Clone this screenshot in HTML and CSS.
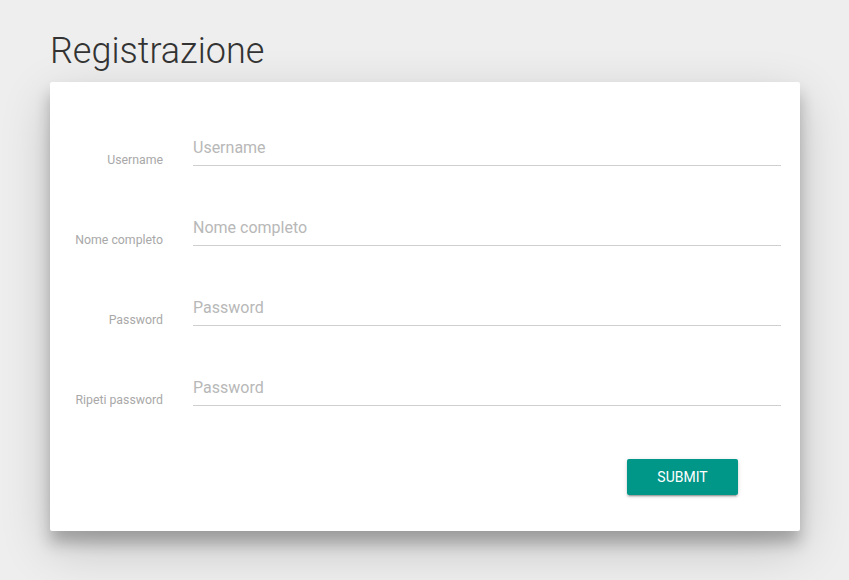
FILE: index.html
```html
<!DOCTYPE html>
<html lang="it">
<head>
<meta charset="utf-8">
<title>Registrazione</title>
<link rel="stylesheet" href="styles.css">
</head>
<body>
<main class="page">
  <h1 class="title">Registrazione</h1>
  <form class="card">
    <div class="row">
      <label class="label" for="u">Username</label>
      <input class="field" id="u" type="text" placeholder="Username">
    </div>
    <div class="row">
      <label class="label" for="n">Nome completo</label>
      <input class="field" id="n" type="text" placeholder="Nome completo">
    </div>
    <div class="row">
      <label class="label" for="p">Password</label>
      <input class="field" id="p" type="password" placeholder="Password">
    </div>
    <div class="row">
      <label class="label" for="r">Ripeti password</label>
      <input class="field" id="r" type="password" placeholder="Password">
    </div>
    <div class="actions">
      <button class="btn" type="button">SUBMIT</button>
    </div>
  </form>
</main>
</body>
</html>
```
FILE: styles.css
```css
* { box-sizing: border-box; }
html, body { margin: 0; padding: 0; }
body {
  background: #eeeeee;
  font-family: Roboto, "Liberation Sans", sans-serif;
  width: 849px;
  height: 580px;
  overflow: hidden;
}
.page {
  padding: 0 49px 0 50px;
}
.title {
  margin: 0;
  padding-top: 29px;
  height: 82px;
  font-weight: 300;
  font-size: 36px;
  line-height: 44px;
  color: #333333;
}
.card {
  background: #fff;
  border-radius: 2px;
  box-shadow: 0 12px 15px 0 rgba(0,0,0,0.24), 0 17px 50px 0 rgba(0,0,0,0.19);
  padding: 49px 19px 36px 0;
  display: flex;
  flex-direction: column;
  gap: 45px;
  height: 449px;
}
.row {
  display: grid;
  grid-template-columns: 113px 1fr;
  column-gap: 30px;
  align-items: end;
}
.label {
  text-align: right;
  font-size: 12.3px;
  line-height: 12px;
  color: #a8a8a8;
}
.field {
  display: block;
  width: 100%;
  height: 35px;
  border: none;
  border-bottom: 1px solid #cfcfcf;
  outline: none;
  padding: 0 0 2px 0;
  font-family: Roboto, "Liberation Sans", sans-serif;
  font-size: 16px;
  color: #333;
  background: transparent;
}
.field::placeholder { color: #b8b8b8; }
.actions {
  display: flex;
  justify-content: flex-end;
  padding-right: 43px;
  margin-top: 8px;
}
.btn {
  width: 111px;
  height: 36px;
  border: none;
  border-radius: 2px;
  background: #009688;
  color: #fff;
  font-family: Roboto, "Liberation Sans", sans-serif;
  font-size: 14px;
  letter-spacing: 0;
  box-shadow: 0 2px 2px 0 rgba(0,0,0,0.14), 0 1px 5px 0 rgba(0,0,0,0.12), 0 3px 1px -2px rgba(0,0,0,0.2);
  cursor: pointer;
}
```
